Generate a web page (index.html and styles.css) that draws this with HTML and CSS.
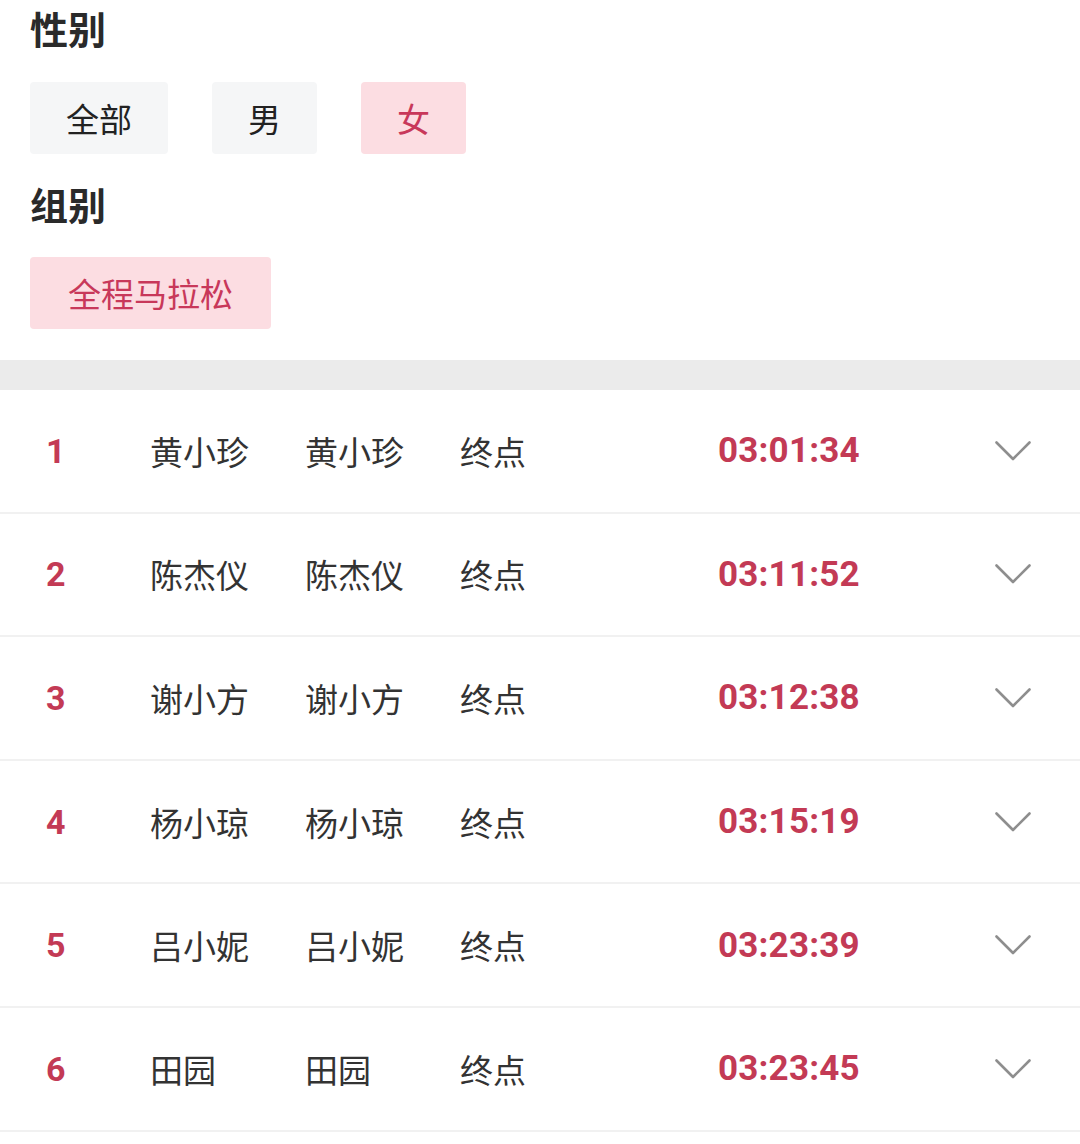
FILE: index.html
```html
<!DOCTYPE html>
<html lang="zh-CN">
<head>
<meta charset="utf-8">
<title>成绩</title>
<link rel="stylesheet" href="styles.css">
</head>
<body>
<div class="filters">
  <div class="section-title first">性别</div>
  <div class="options">
    <div class="opt">全部</div>
    <div class="opt">男</div>
    <div class="opt active">女</div>
  </div>
  <div class="section-title">组别</div>
  <div class="options second">
    <div class="opt active wide">全程马拉松</div>
  </div>
</div>
<div class="band"></div>
<div class="list">
  <div class="row"><span class="rank">1</span><span class="name">黄小珍</span><span class="name">黄小珍</span><span class="name">终点</span><span class="time">03:01:34</span><svg class="chev" viewBox="0 0 36 20" width="36" height="20"><path d="M1.5 1.5 L18 18 L34.5 1.5"/></svg></div>
  <div class="row"><span class="rank">2</span><span class="name">陈杰仪</span><span class="name">陈杰仪</span><span class="name">终点</span><span class="time">03:11:52</span><svg class="chev" viewBox="0 0 36 20" width="36" height="20"><path d="M1.5 1.5 L18 18 L34.5 1.5"/></svg></div>
  <div class="row"><span class="rank">3</span><span class="name">谢小方</span><span class="name">谢小方</span><span class="name">终点</span><span class="time">03:12:38</span><svg class="chev" viewBox="0 0 36 20" width="36" height="20"><path d="M1.5 1.5 L18 18 L34.5 1.5"/></svg></div>
  <div class="row"><span class="rank">4</span><span class="name">杨小琼</span><span class="name">杨小琼</span><span class="name">终点</span><span class="time">03:15:19</span><svg class="chev" viewBox="0 0 36 20" width="36" height="20"><path d="M1.5 1.5 L18 18 L34.5 1.5"/></svg></div>
  <div class="row"><span class="rank">5</span><span class="name">吕小妮</span><span class="name">吕小妮</span><span class="name">终点</span><span class="time">03:23:39</span><svg class="chev" viewBox="0 0 36 20" width="36" height="20"><path d="M1.5 1.5 L18 18 L34.5 1.5"/></svg></div>
  <div class="row"><span class="rank">6</span><span class="name">田园</span><span class="name">田园</span><span class="name">终点</span><span class="time">03:23:45</span><svg class="chev" viewBox="0 0 36 20" width="36" height="20"><path d="M1.5 1.5 L18 18 L34.5 1.5"/></svg></div>
</div>
</body>
</html>
```

FILE: styles.css
```css
html, body {
  margin: 0;
  padding: 0;
  background: #ffffff;
}
body {
  font-family: "Noto Sans CJK SC", "Noto Sans", sans-serif;
  color: #333333;
  width: 1080px;
  overflow: hidden;
}
.filters {
  padding: 3px 30px 31px 30px;
}
.section-title {
  font-size: 38px;
  font-weight: 700;
  line-height: 50px;
  height: 50px;
  color: #2a2a2a;
  margin-top: 25px;
}
.section-title.first {
  margin-top: 0;
}
.options {
  display: flex;
  gap: 44px;
  margin-top: 29px;
}
.options.second {
  margin-top: 28px;
}
.opt {
  height: 72px;
  line-height: 72px;
  padding: 0 36px;
  background: #f5f6f7;
  font-size: 33px;
  color: #222222;
  border-radius: 4px;
}
.opt.active {
  background: #fcdde2;
  color: #c8385a;
}
.opt.wide {
  padding: 0 38px;
}
.band {
  height: 30px;
  background: #ebebeb;
}
.row {
  display: grid;
  grid-template-columns: 104px 155px 155px 258px 277px 36px;
  align-items: center;
  height: 121.6px;
  padding-left: 46px;
  border-bottom: 2px solid #f1f1f1;
}
.rank {
  font-family: Roboto, "Liberation Sans", sans-serif;
  font-weight: 700;
  font-size: 34px;
  color: #c33a55;
}
.name {
  font-size: 33px;
  color: #333333;
}
.time {
  font-family: Roboto, "Liberation Sans", sans-serif;
  font-weight: 700;
  font-size: 35px;
  letter-spacing: 0.2px;
  color: #c33a55;
}
.chev {
  display: block;
}
.chev path {
  fill: none;
  stroke: #8e8e8e;
  stroke-width: 2.6;
  stroke-linecap: round;
  stroke-linejoin: round;
}
```
